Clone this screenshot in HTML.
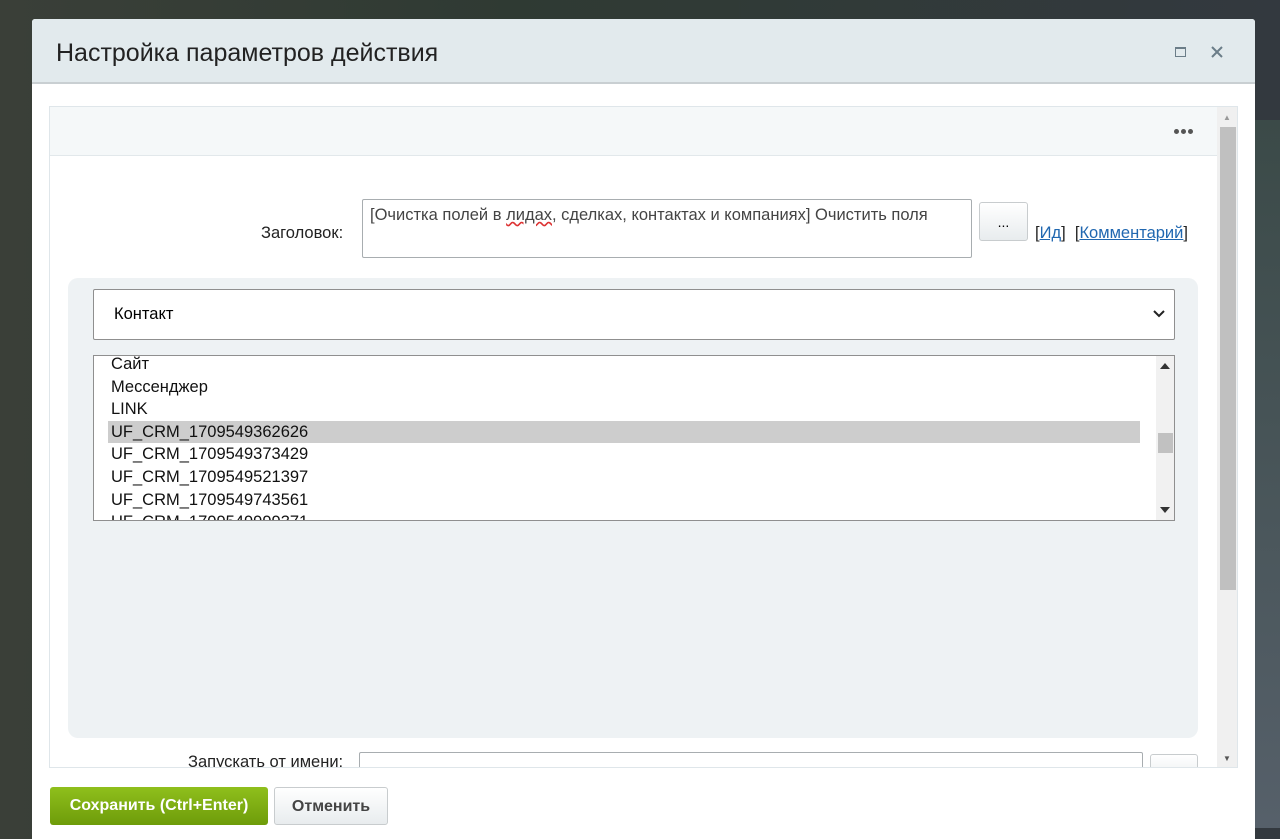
<!DOCTYPE html>
<html><head><meta charset="utf-8"><style>
*{box-sizing:border-box;margin:0;padding:0}
body{width:1280px;height:828px;overflow:hidden;font-family:"Liberation Sans",sans-serif;background:linear-gradient(90deg,#3a3f38 0%,#2f3a33 40%,#33393f 100%);position:relative}
.rt{position:absolute;left:1255px;top:120px;width:25px;height:708px;background:linear-gradient(#3b4a48,#56606a)}
.dlg{position:absolute;left:32px;top:19px;width:1223px;height:820px;background:#fff;border-radius:3px 3px 0 0}
.hd{height:65px;background:#e2eaed;border-bottom:2px solid #c9cfd2;border-radius:3px 3px 0 0;position:relative}
.hd h1{position:absolute;left:24px;top:20px;font-weight:normal;font-size:25px;color:#222}
.panel{position:absolute;left:17px;top:87px;width:1189px;height:662px;border:1px solid #dfe6ea;overflow:hidden}
.top{height:49px;background:#f5f8f9;border-bottom:1px solid #e2e8eb;position:relative}
.sb{position:absolute;right:0;top:0;width:20px;height:100%;background:#f0f0f0}
.thumb{position:absolute;left:3px;top:20px;width:16px;height:463px;background:#c0c0c0}
a{color:#2067b0}
.lbl{position:absolute;font-size:16.5px;color:#222}
.ta{position:absolute;left:312px;top:92px;width:610px;height:59px;border:1px solid #a8adb0;border-radius:2px;font-size:16.5px;color:#444;padding:6px 7px}
.btn{position:absolute;border:1px solid #c8ccce;border-radius:3px;background:linear-gradient(#fff,#e8ecee)}
.gray{position:absolute;left:18px;top:171px;width:1130px;height:460px;background:#eef2f4;border-radius:10px}
.sel{position:absolute;left:25px;top:11px;width:1082px;height:51px;background:#fff;border:1px solid #8f8f8f;border-radius:2px;font-size:16.5px;padding:15px 20px}
.list{position:absolute;left:25px;top:77px;width:1082px;height:166px;background:#fff;border:1px solid #8f8f8f;overflow:hidden;font-size:16.5px;color:#111}
.list p{height:22.6px;padding-left:17px;line-height:22px}
.list .s{background:#cdcdcd;margin-left:14px;padding-left:3px;margin-right:34px}
.lsb{position:absolute;right:0;top:0;width:18px;height:100%;background:#f1f1f1}
.dot{position:absolute;top:22px;width:5px;height:5px;border-radius:50%;background:#555}
</style></head><body>
<div class="rt"></div>
<div class="dlg">
<div class="hd"><h1>Настройка параметров действия</h1>
<div style="position:absolute;left:1143px;top:28px;width:11px;height:10px;border:1.5px solid #6b7d88;border-top-width:2.5px"></div>
<svg style="position:absolute;left:1179px;top:27px" width="12" height="12"><path d="M1 1L11 11M11 1L1 11" stroke="#6b7d88" stroke-width="2"/></svg>
</div>
<div class="panel">
<div class="top"><div class="dot" style="left:1124px"></div><div class="dot" style="left:1131px"></div><div class="dot" style="left:1138px"></div></div>
<div class="sb"><div style="position:absolute;left:6px;top:6px;font-size:8px;color:#999">▲</div><div class="thumb"></div><div style="position:absolute;left:6px;bottom:4px;font-size:8px;color:#555">▼</div></div>
<div class="lbl" style="left:211px;top:117px">Заголовок:</div>
<div class="ta">[Очистка полей в <span style="text-decoration:underline wavy #d33">лидах</span>, сделках, контактах и компаниях] Очистить поля</div>
<div class="btn" style="left:929px;top:95px;width:49px;height:39px;text-align:center;font-size:14px;padding-top:11px">...</div>
<div class="lbl" style="left:985px;top:117px">[<a href="#">Ид</a>]&nbsp; [<a href="#">Комментарий</a>]</div>
<div class="gray">
<div class="sel">Контакт<svg style="position:absolute;right:9px;top:20px" width="12" height="8"><path d="M1 1L6 6L11 1" stroke="#222" stroke-width="2" fill="none"/></svg></div>
<div class="list"><p style="margin-top:-3px">Сайт</p><p>Мессенджер</p><p>LINK</p><p class="s">UF_CRM_1709549362626</p><p>UF_CRM_1709549373429</p><p>UF_CRM_1709549521397</p><p>UF_CRM_1709549743561</p><p>UF_CRM_1709549999371</p>
<div class="lsb"><svg style="position:absolute;left:4px;top:7px" width="10" height="6"><path d="M0 6L5 0L10 6Z" fill="#333"/></svg><div style="position:absolute;left:2px;top:77px;width:15px;height:20px;background:#c1c1c1"></div><svg style="position:absolute;left:4px;bottom:7px" width="10" height="6"><path d="M0 0L5 6L10 0Z" fill="#333"/></svg></div>
</div>
</div>
<div class="lbl" style="left:138px;top:646px">Запускать от имени:</div>
<div style="position:absolute;left:309px;top:645px;width:784px;height:30px;border:1px solid #a8adb0;border-radius:2px"></div>
<div class="btn" style="left:1100px;top:647px;width:48px;height:30px"></div>
</div>
<div style="position:absolute;left:18px;top:768px;width:218px;height:38px;border-radius:3px;background:linear-gradient(#8fbf1c,#6e9c0a);color:#fff;font-weight:bold;font-size:16px;text-align:center;padding-top:10px">Сохранить (Ctrl+Enter)</div>
<div class="btn" style="left:242px;top:768px;width:114px;height:38px;text-align:center;font-size:16px;font-weight:bold;color:#444;padding-top:10px">Отменить</div>
</div>
</body></html>
